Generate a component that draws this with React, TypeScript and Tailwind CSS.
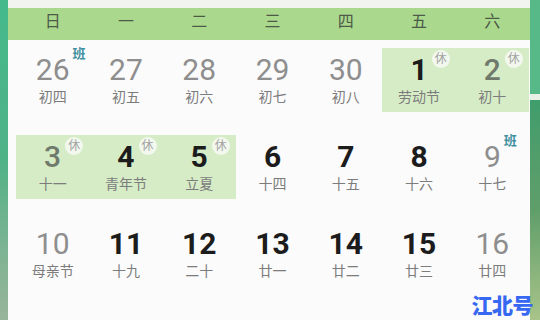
import React from "react";

type Day = {
  n: number;
  lunar: string;
  muted?: boolean;
  off?: boolean;
  badge?: "休" | "班";
};

const weekdays = ["日", "一", "二", "三", "四", "五", "六"];

const weeks: Day[][] = [
  [
    { n: 26, lunar: "初四", muted: true, badge: "班" },
    { n: 27, lunar: "初五", muted: true },
    { n: 28, lunar: "初六", muted: true },
    { n: 29, lunar: "初七", muted: true },
    { n: 30, lunar: "初八", muted: true },
    { n: 1, lunar: "劳动节", off: true, badge: "休" },
    { n: 2, lunar: "初十", muted: true, off: true, badge: "休" },
  ],
  [
    { n: 3, lunar: "十一", muted: true, off: true, badge: "休" },
    { n: 4, lunar: "青年节", off: true, badge: "休" },
    { n: 5, lunar: "立夏", off: true, badge: "休" },
    { n: 6, lunar: "十四" },
    { n: 7, lunar: "十五" },
    { n: 8, lunar: "十六" },
    { n: 9, lunar: "十七", muted: true, badge: "班" },
  ],
  [
    { n: 10, lunar: "母亲节", muted: true },
    { n: 11, lunar: "十九" },
    { n: 12, lunar: "二十" },
    { n: 13, lunar: "廿一" },
    { n: 14, lunar: "廿二" },
    { n: 15, lunar: "廿三" },
    { n: 16, lunar: "廿四", muted: true },
  ],
  [
    { n: 17, lunar: "廿五", muted: true },
    { n: 18, lunar: "廿六" },
    { n: 19, lunar: "廿七" },
    { n: 20, lunar: "廿八" },
    { n: 21, lunar: "廿九" },
    { n: 22, lunar: "三十" },
    { n: 23, lunar: "四月", muted: true },
  ],
];

const DayCell = ({ day }: { day: Day }) => {
  const numColor = day.muted
    ? day.off
      ? "text-[#6f7a6c] font-medium"
      : "text-[#8e8e8e] font-normal"
    : "text-[#1c1c1c] font-bold";

  return (
    <div className="h-[87px] pt-2 shrink-0">
      <div className={`h-[64px] flex flex-col items-center pt-[4px] ${day.off ? "bg-[#d6ecc6]" : ""}`}>
        <div className="relative">
          <span className={`block text-[30px] leading-[36px] ${numColor}`}>{day.n}</span>
          {day.badge === "班" && (
            <span className="absolute left-full top-[-6px] ml-[3px] text-[13px] leading-[16px] font-bold text-[#3f8f9e]">
              班
            </span>
          )}
          {day.badge === "休" && (
            <span className="absolute left-full top-[-2px] ml-[4px] w-[18px] h-[18px] rounded-full bg-[#f2f8ee] flex items-center justify-center text-[12px] leading-none text-[#a3a3a3]">
              休
            </span>
          )}
        </div>
        <span className="text-[14px] leading-[18px] text-[#7c7c7c]">{day.lunar}</span>
      </div>
    </div>
  );
};

const App = () => {
  return (
    <div
      className="relative w-[540px] h-[320px] overflow-hidden flex bg-[#fbfbfb]"
      style={{ fontFamily: 'Roboto, "Noto Sans CJK SC", sans-serif' }}
    >
      <div className="w-[8px] shrink-0 bg-gradient-to-b from-[#43b98b] via-[#4fb287] to-[#98b49a]" />

      <div className="flex-1 flex flex-col">
        <div className="h-[8px] shrink-0 bg-[#f1f4ef]" />
        <div className="h-[32px] shrink-0 bg-[#aad98d] grid grid-cols-7 pl-[8px] pr-[1px]">
          {weekdays.map((w) => (
            <div key={w} className="flex items-center justify-center pb-[4px] text-[16px] text-[#4d5a47]">
              {w}
            </div>
          ))}
        </div>
        <div className="shrink-0 pl-[8px] pr-[1px]">
          {weeks.map((week, i) => (
            <div key={i} className="grid grid-cols-7">
              {week.map((d) => (
                <DayCell key={d.n} day={d} />
              ))}
            </div>
          ))}
        </div>
      </div>

      <div className="w-[10px] shrink-0 flex flex-col">
        <div className="h-[94px] shrink-0 bg-[#57b888]" />
        <div className="h-[6px] shrink-0 bg-[#e9f1e6]" />
        <div className="flex-1 bg-gradient-to-b from-[#3f9d6c] via-[#5f9e6a] to-[#a8c48a]" />
      </div>

      <span
        className="absolute right-[7px] bottom-[3px] text-[21px] leading-[26px] font-black text-[#3768f2] tracking-[-0.5px]"
        style={{ fontFamily: '"Noto Sans CJK SC", sans-serif' }}
      >
        江北号
      </span>
    </div>
  );
};

export default App;
